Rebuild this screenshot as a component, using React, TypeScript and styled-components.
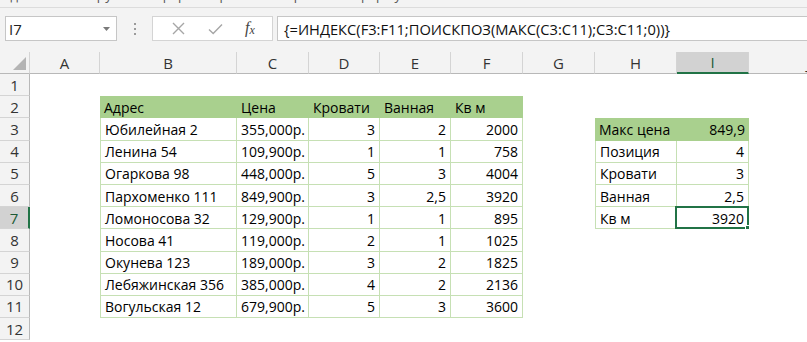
import { FC } from 'react';
import styled, { createGlobalStyle } from 'styled-components';

const GlobalStyle = createGlobalStyle`
  html, body {
    margin: 0;
    padding: 0;
    background: #ffffff;
    overflow: hidden;
  }
  body {
    font-family: 'Open Sans', 'Noto Sans', sans-serif;
    color: #000;
  }
`;

const GREEN = '#217346';
const TABLE_LINE = '#c6e0b4';
const HEAD_FILL = '#a9d08e';

const Page = styled.div`
  width: 807px;
  height: 342px;
  display: flex;
  flex-direction: column;
  overflow: hidden;
`;

const RibbonRest = styled.div`
  height: 7px;
  overflow: hidden;
  background: #f3f3f3;
  border-bottom: 1px solid #dcdcdc;
  font-size: 13px;
  line-height: 13px;
  color: #555;
  padding-left: 2px;
  white-space: nowrap;

  span {
    display: block;
    margin-top: -11px;
    letter-spacing: 0.5px;
  }
`;

const FormulaBar = styled.div`
  height: 44px;
  box-sizing: border-box;
  background: #f3f3f3;
  display: flex;
  align-items: flex-start;
  padding: 8px 0 0 5px;
`;

const NameBox = styled.div`
  width: 112px;
  height: 25px;
  box-sizing: border-box;
  background: #fff;
  border: 1px solid #c6c6c6;
  display: flex;
  align-items: center;
  justify-content: space-between;
  padding: 0 6px 0 3px;
  font-size: 15px;
  color: #222;
`;

const Grip = styled.div`
  width: 35px;
  height: 25px;
  display: flex;
  flex-direction: column;
  align-items: center;
  justify-content: center;
  gap: 3px;

  i {
    width: 2px;
    height: 2px;
    background: #9a9a9a;
    display: block;
  }
`;

const FxBox = styled.div`
  width: 121px;
  height: 25px;
  box-sizing: border-box;
  background: #fff;
  border: 1px solid #d4d4d4;
  display: flex;
  align-items: center;
  justify-content: space-around;
  padding: 0 6px 0 8px;
  margin-right: 4px;
`;

const FxLabel = styled.span`
  font-family: 'Liberation Serif', 'DejaVu Serif', serif;
  font-style: italic;
  font-size: 16px;
  color: #444;

  sub {
    font-size: 12px;
    vertical-align: -1px;
  }
`;

const FormulaInput = styled.div`
  flex: 1;
  height: 25px;
  box-sizing: border-box;
  background: #fff;
  border: 1px solid #c6c6c6;
  border-right: none;
  display: flex;
  align-items: center;
  padding-left: 6px;
  font-size: 14.7px;
  color: #111;
  white-space: nowrap;
`;

const Sheet = styled.div`
  display: grid;
  grid-template-columns: 30px 70px 137px 72px 71px 71px 72px 72px 82px 72px 120px;
  grid-template-rows: 22px;
  grid-auto-rows: 22.2px;
  font-size: 14px;
`;

const Corner = styled.div`
  background: #f3f3f3;
  border-right: 1px solid #d4d4d4;
  border-bottom: 1px solid #b8b8b8;
  box-sizing: border-box;
  display: flex;
  align-items: flex-end;
  justify-content: flex-end;
  padding: 0 3px 3px 0;
`;

const ColHead = styled.div<{ $active?: boolean }>`
  box-sizing: border-box;
  background: ${(p) => (p.$active ? '#d2d2d2' : '#f3f3f3')};
  border-right: 1px solid #d4d4d4;
  border-bottom: ${(p) => (p.$active ? `2px solid ${GREEN}` : '1px solid #b8b8b8')};
  display: flex;
  align-items: center;
  justify-content: center;
  color: ${(p) => (p.$active ? '#1d5a36' : '#333')};
  font-size: 15px;
  overflow: hidden;
`;

const RowHead = styled.div<{ $active?: boolean }>`
  box-sizing: border-box;
  background: ${(p) => (p.$active ? '#d2d2d2' : '#f3f3f3')};
  border-bottom: 1px solid #d4d4d4;
  border-right: ${(p) => (p.$active ? `2px solid ${GREEN}` : '1px solid #b8b8b8')};
  display: flex;
  align-items: center;
  justify-content: center;
  color: ${(p) => (p.$active ? '#1d5a36' : '#333')};
  font-size: 15px;
`;

const Cell = styled.div<{
  $head?: boolean;
  $lined?: boolean;
  $first?: boolean;
  $num?: boolean;
  $sel?: boolean;
}>`
  position: relative;
  box-sizing: border-box;
  display: flex;
  align-items: center;
  justify-content: ${(p) => (p.$num ? 'flex-end' : 'flex-start')};
  padding: 1px 4px 0 4px;
  white-space: nowrap;
  background: ${(p) => (p.$head ? HEAD_FILL : '#fff')};
  border-right: ${(p) => (p.$lined ? `1px solid ${TABLE_LINE}` : 'none')};
  border-bottom: ${(p) => (p.$lined ? `1px solid ${TABLE_LINE}` : 'none')};
  border-left: ${(p) => (p.$first ? `1px solid ${TABLE_LINE}` : 'none')};
  color: #000;

  ${(p) =>
    p.$sel &&
    `
    &::before {
      content: '';
      position: absolute;
      inset: -1px -1px -1px -2px;
      border: 2px solid ${GREEN};
      pointer-events: none;
    }
    &::after {
      content: '';
      position: absolute;
      right: -4px;
      bottom: -4px;
      width: 5px;
      height: 5px;
      background: ${GREEN};
      border: 1px solid #fff;
    }
  `}
`;

type Value = { text: string; num?: boolean };

const cols = ['A', 'B', 'C', 'D', 'E', 'F', 'G', 'H', 'I', 'J'];

const tableHead = ['Адрес', 'Цена', 'Кровати', 'Ванная', 'Кв м'];

const tableRows: string[][] = [
  ['Юбилейная 2', '355,000р.', '3', '2', '2000'],
  ['Ленина 54', '109,900р.', '1', '1', '758'],
  ['Огаркова 98', '448,000р.', '5', '3', '4004'],
  ['Пархоменко 111', '849,900р.', '3', '2,5', '3920'],
  ['Ломоносова 32', '129,900р.', '1', '1', '895'],
  ['Носова 41', '119,000р.', '2', '1', '1025'],
  ['Окунева 123', '189,000р.', '3', '2', '1825'],
  ['Лебяжинская 356', '385,000р.', '4', '2', '2136'],
  ['Вогульская 12', '679,900р.', '5', '3', '3600'],
];

const summary: [string, string][] = [
  ['Макс цена', '849,9'],
  ['Позиция', '4'],
  ['Кровати', '3'],
  ['Ванная', '2,5'],
  ['Кв м', '3920'],
];

// column numbers: A = 1 ... J = 10
const B = 2;
const F = 6;
const H = 8;
const I = 9;

const CloseIcon = () => (
  <svg width="13" height="13" viewBox="0 0 13 13">
    <path d="M1 1 L12 12 M12 1 L1 12" stroke="#a6a6a6" strokeWidth="1.4" fill="none" />
  </svg>
);

const CheckIcon = () => (
  <svg width="15" height="12" viewBox="0 0 15 12">
    <path d="M1 6.5 L5.2 10.5 L14 1.5" stroke="#a6a6a6" strokeWidth="1.4" fill="none" />
  </svg>
);

const Caret = () => (
  <svg width="7" height="4" viewBox="0 0 7 4">
    <path d="M0 0 H7 L3.5 4 Z" fill="#7a7a7a" />
  </svg>
);

const CornerMark = () => (
  <svg width="13" height="13" viewBox="0 0 13 13">
    <path d="M13 0 V13 H0 Z" fill="#b4b4b4" />
  </svg>
);

const inTable = (row: number, col: number) => col >= B && col <= F && row >= 2 && row <= 11;
const inSummary = (row: number, col: number) => (col === H || col === I) && row >= 3 && row <= 7;

// value that a sheet cell holds, or nothing
const cellAt = (row: number, col: number): Value | null => {
  if (inTable(row, col)) {
    if (row === 2) return { text: tableHead[col - B] };
    return { text: tableRows[row - 3][col - B], num: col > B + 1 };
  }
  if (inSummary(row, col)) {
    const pair = summary[row - 3];
    return col === H ? { text: pair[0] } : { text: pair[1], num: true };
  }
  return null;
};

const App: FC = () => {
  const rows = Array.from({ length: 12 }, (_, i) => i + 1);

  return (
    <Page>
      <GlobalStyle />
      <RibbonRest>
        <span>Удобные инструменты форматирования и работы с формулами на ленте</span>
      </RibbonRest>
      <FormulaBar>
        <NameBox>
          <span>I7</span>
          <Caret />
        </NameBox>
        <Grip>
          <i />
          <i />
          <i />
        </Grip>
        <FxBox>
          <CloseIcon />
          <CheckIcon />
          <FxLabel>
            f<sub>x</sub>
          </FxLabel>
        </FxBox>
        <FormulaInput>{'{=ИНДЕКС(F3:F11;ПОИСКПОЗ(МАКС(C3:C11);C3:C11;0))}'}</FormulaInput>
      </FormulaBar>
      <Sheet>
        <Corner>
          <CornerMark />
        </Corner>
        {cols.map((c) => (
          <ColHead key={c} $active={c === 'I'}>
            {c}
          </ColHead>
        ))}
        {rows.map((r) => [
          <RowHead key={`h${r}`} $active={r === 7}>
            {r}
          </RowHead>,
          ...cols.map((c, ci) => {
            const col = ci + 1;
            const v = cellAt(r, col);
            const table = inTable(r, col);
            const summ = inSummary(r, col);
            const head = (table && r === 2) || (summ && r === 3);
            const lined = (table || summ) && !head;
            return (
              <Cell
                key={`${c}${r}`}
                $head={head}
                $lined={lined}
                $first={lined && (col === B || col === H)}
                $num={v?.num}
                $sel={col === I && r === 7}
              >
                {v?.text}
              </Cell>
            );
          }),
        ])}
      </Sheet>
    </Page>
  );
};

export default App;
